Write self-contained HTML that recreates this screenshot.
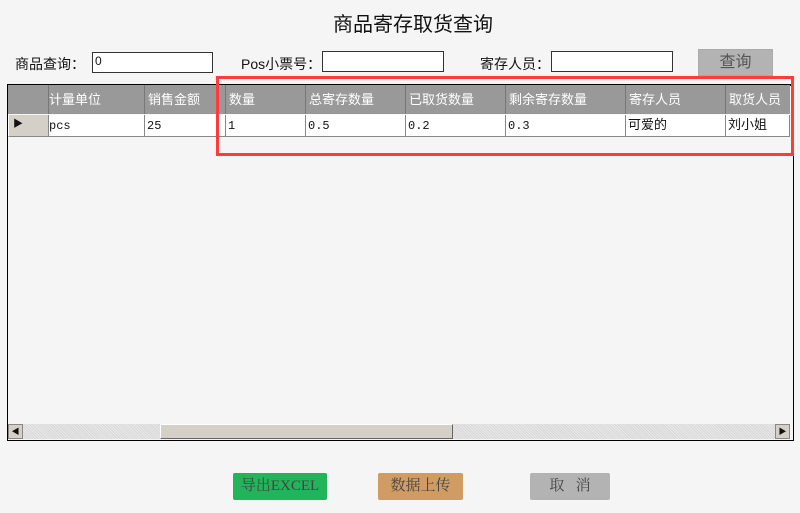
<!DOCTYPE html>
<html><head><meta charset="utf-8"><style>
body{margin:0;width:800px;height:513px;background:#f5f5f5;font-family:"Liberation Sans","Noto Sans CJK SC",sans-serif;position:relative;overflow:hidden;color:#111}
.a{position:absolute}
.inp{position:absolute;background:#fff;border:1px solid #333;height:21px;box-sizing:border-box;font-size:12px;padding-left:2px;line-height:17px}
.lbl{position:absolute;font-size:14px;top:54px}
.h{position:absolute;top:85px;height:29px;background:#999;color:#fff;font-size:13px;line-height:30px;border-left:1px solid #777;padding-left:3px;box-sizing:border-box}
.c{position:absolute;top:115px;height:22px;background:#fff;font-size:12px;line-height:22px;border-left:1px solid #888;border-bottom:1px solid #888;padding-left:2px;box-sizing:border-box;font-family:"Liberation Mono","Noto Sans CJK SC",monospace}
.btn{position:absolute;top:473px;height:27px;border-radius:2px;color:#444;font-size:15px;text-align:center;line-height:27px;font-family:"Liberation Serif","Noto Serif CJK SC",serif}
</style></head><body>
<div class="a" style="left:0;width:826px;top:8px;text-align:center;font-size:20px">商品寄存取货查询</div>
<div class="lbl" style="left:15px">商品查询：</div>
<div class="inp" style="left:92px;top:52px;width:121px">0</div>
<div class="lbl" style="left:241px">Pos小票号：</div>
<div class="inp" style="left:322px;top:51px;width:122px"></div>
<div class="lbl" style="left:480px">寄存人员：</div>
<div class="inp" style="left:551px;top:51px;width:122px"></div>
<div class="a" style="left:698px;top:49px;width:75px;height:27px;background:#b3b3b3;border:1px solid #aaa;box-sizing:border-box;text-align:center;line-height:26px;font-size:16px;color:#555">查询</div>

<div class="a" style="left:7px;top:84px;width:787px;height:357px;background:#f5f5f5;border:1px solid #000;border-top:2px solid #000;box-sizing:border-box"></div>
<div class="a" style="left:8px;top:85px;width:782px;height:29px;background:#999"></div>
<div class="h" style="left:8px;width:40px;border-left:none"></div>
<div class="h" style="left:48px;width:96px;padding-left:0">计量单位</div>
<div class="h" style="left:144px;width:81px">销售金额</div>
<div class="h" style="left:225px;width:80px">数量</div>
<div class="h" style="left:305px;width:100px">总寄存数量</div>
<div class="h" style="left:405px;width:100px">已取货数量</div>
<div class="h" style="left:505px;width:120px">剩余寄存数量</div>
<div class="h" style="left:625px;width:100px">寄存人员</div>
<div class="h" style="left:725px;width:65px">取货人员</div>
<div class="c" style="left:8px;width:40px;background:#d4d0c8;border-left:1px solid #fff;font-size:10px;padding-left:4px">▶</div>
<div class="c" style="left:48px;width:96px;padding-left:0">pcs</div>
<div class="c" style="left:144px;width:81px">25</div>
<div class="c" style="left:225px;width:80px">1</div>
<div class="c" style="left:305px;width:100px">0.5</div>
<div class="c" style="left:405px;width:100px">0.2</div>
<div class="c" style="left:505px;width:120px">0.3</div>
<div class="c" style="left:625px;width:100px;font-size:13px">可爱的</div>
<div class="c" style="left:725px;width:65px;font-size:13px;border-right:1px solid #888">刘小姐</div>

<div class="a" style="left:8px;top:424px;width:782px;height:15px;background:repeating-linear-gradient(45deg,#e8e8e8 0 1px,#d8d8d8 1px 2px)"></div>
<div class="a" style="left:8px;top:424px;width:15px;height:15px;background:#d4d0c8;border:1px solid #888;box-sizing:border-box;font-size:8px;line-height:13px;text-align:center">◀</div>
<div class="a" style="left:160px;top:424px;width:293px;height:15px;background:#d4d0c8;border-top:1px solid #fff;border-left:1px solid #fff;border-right:1px solid #666;border-bottom:1px solid #666;box-sizing:border-box"></div>
<div class="a" style="left:775px;top:424px;width:15px;height:15px;background:#d4d0c8;border:1px solid #888;box-sizing:border-box;font-size:8px;line-height:13px;text-align:center">▶</div>

<div class="a" style="left:216px;top:76px;width:578px;height:80px;border:3px solid #ff3b3b;box-sizing:border-box"></div>

<div class="btn" style="left:233px;width:94px;background:#22b45a">导出EXCEL</div>
<div class="btn" style="left:378px;width:85px;background:#d09c64">数据上传</div>
<div class="btn" style="left:530px;width:80px;background:#b3b3b3">取&nbsp;&nbsp;&nbsp;消</div>
</body></html>
